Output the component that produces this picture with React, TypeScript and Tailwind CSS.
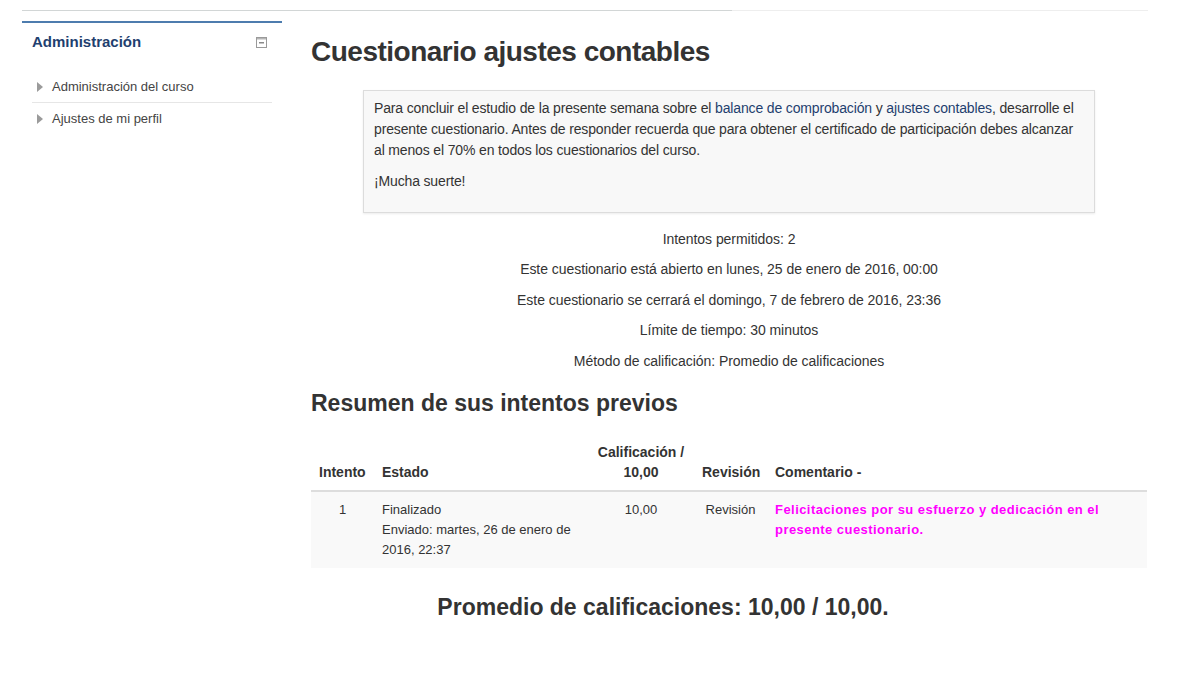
import React from "react";

const font = { fontFamily: '"Liberation Sans", Arial, sans-serif' };

function CollapseIcon() {
  return (
    <svg width="11" height="11" viewBox="0 0 11 11">
      <rect x="0.5" y="0.5" width="10" height="10" fill="#fff" stroke="#9a9a9a" />
      <rect x="1" y="1" width="9" height="1.5" fill="#b5b5b5" />
      <rect x="3" y="5" width="5" height="1.5" fill="#8a8a8a" />
    </svg>
  );
}

function Tri() {
  return (
    <svg width="6" height="10" viewBox="0 0 6 10">
      <path d="M0 0 L6 5 L0 10 Z" fill="#9b9b9b" />
    </svg>
  );
}

export default function App() {
  return (
    <div className="w-[1200px] h-[675px] bg-white text-[#333] overflow-hidden" style={font}>
      <div className="pt-[10px] pl-[22px]">
        <div className="flex">
          <div className="w-[710px] h-px bg-[#d2d6d6]" />
          <div className="w-[416px] h-px bg-[#eeeeee]" />
        </div>
        <div className="flex">
          {/* Sidebar */}
          <div className="w-[260px] mt-[10px] border-t-2 border-[#4d7cae]">
            <div className="flex items-center justify-between pl-[10px] pr-[15px] pt-[9px] h-[30px]">
              <span className="text-[15px] font-bold text-[#1f3f6f]">Administración</span>
              <CollapseIcon />
            </div>
            <div className="pl-[10px] pr-[10px] mt-[19px] text-[13px] text-[#444]">
              <div className="flex items-center gap-[9px] pl-[5px] h-[31px] border-b border-[#e6e6e6]">
                <Tri />
                <span>Administración del curso</span>
              </div>
              <div className="flex items-center gap-[9px] pl-[5px] h-[31px]">
                <Tri />
                <span>Ajustes de mi perfil</span>
              </div>
            </div>
          </div>
          {/* Main */}
          <div className="ml-[29px] w-[836px]">
            <h2 className="text-[28px] font-bold leading-[32px] mt-[25px] tracking-[-0.5px] text-[#333]">
              Cuestionario ajustes contables
            </h2>
            <div className="ml-[52px] mt-[22px] w-[732px] border border-[#dcdcdc] bg-[#f8f8f8] shadow-[0_1px_2px_rgba(0,0,0,0.08)] px-[10px] pt-[7px] pb-[10px] text-[14px] leading-[21px] tracking-[-0.15px]">
              <p>
                Para concluir el estudio de la presente semana sobre el{" "}
                <span className="text-[#1f3f6f]">balance de comprobación</span> y{" "}
                <span className="text-[#1f3f6f]">ajustes contables</span>, desarrolle el presente
                cuestionario. Antes de responder recuerda que para obtener el certificado de
                participación debes alcanzar al menos el 70% en todos los cuestionarios del curso.
              </p>
              <p className="mt-[10px] mb-[10px]">¡Mucha suerte!</p>
            </div>
            <div className="mt-[16px] flex flex-col items-center text-[14px] leading-[20px] gap-[10.4px] tracking-[-0.05px]">
              <p>Intentos permitidos: 2</p>
              <p>Este cuestionario está abierto en lunes, 25 de enero de 2016, 00:00</p>
              <p>Este cuestionario se cerrará el domingo, 7 de febrero de 2016, 23:36</p>
              <p>Límite de tiempo: 30 minutos</p>
              <p>Método de calificación: Promedio de calificaciones</p>
            </div>
            <h3 className="mt-[18px] text-[23px] font-bold leading-[28px] text-[#333]">
              Resumen de sus intentos previos
            </h3>
            <table className="mt-[17px] w-full table-fixed border-collapse text-[13px] leading-[20px]">
              <thead>
                <tr className="border-b-2 border-[#dddddd] align-bottom text-[14px]">
                  <th className="w-[63px] px-[8px] py-[8px] text-left font-bold">Intento</th>
                  <th className="w-[214px] px-[8px] py-[8px] text-left font-bold">Estado</th>
                  <th className="w-[106px] px-[8px] py-[8px] text-center font-bold">
                    Calificación /<br />10,00
                  </th>
                  <th className="w-[73px] px-[8px] py-[8px] text-center font-bold">Revisión</th>
                  <th className="px-[8px] py-[8px] text-left font-bold">Comentario -</th>
                </tr>
              </thead>
              <tbody>
                <tr className="bg-[#f9f9f9] align-top">
                  <td className="px-[8px] py-[8px] text-center">1</td>
                  <td className="px-[8px] py-[8px]">
                    <div>Finalizado</div>
                    <div className="text-[13px]">Enviado: martes, 26 de enero de 2016, 22:37</div>
                  </td>
                  <td className="px-[8px] py-[8px] text-center">10,00</td>
                  <td className="px-[8px] py-[8px] text-center">Revisión</td>
                  <td className="px-[8px] pt-[8px] pb-[28px] pr-[40px] font-bold text-[#ff00ff] tracking-[0.45px]">
                    Felicitaciones por su esfuerzo y dedicación en el presente cuestionario.
                  </td>
                </tr>
              </tbody>
            </table>
            <div className="mt-[25px] w-[704px] text-center text-[23px] font-bold leading-[28px]">
              Promedio de calificaciones: 10,00 / 10,00.
            </div>
          </div>
        </div>
      </div>
    </div>
  );
}
